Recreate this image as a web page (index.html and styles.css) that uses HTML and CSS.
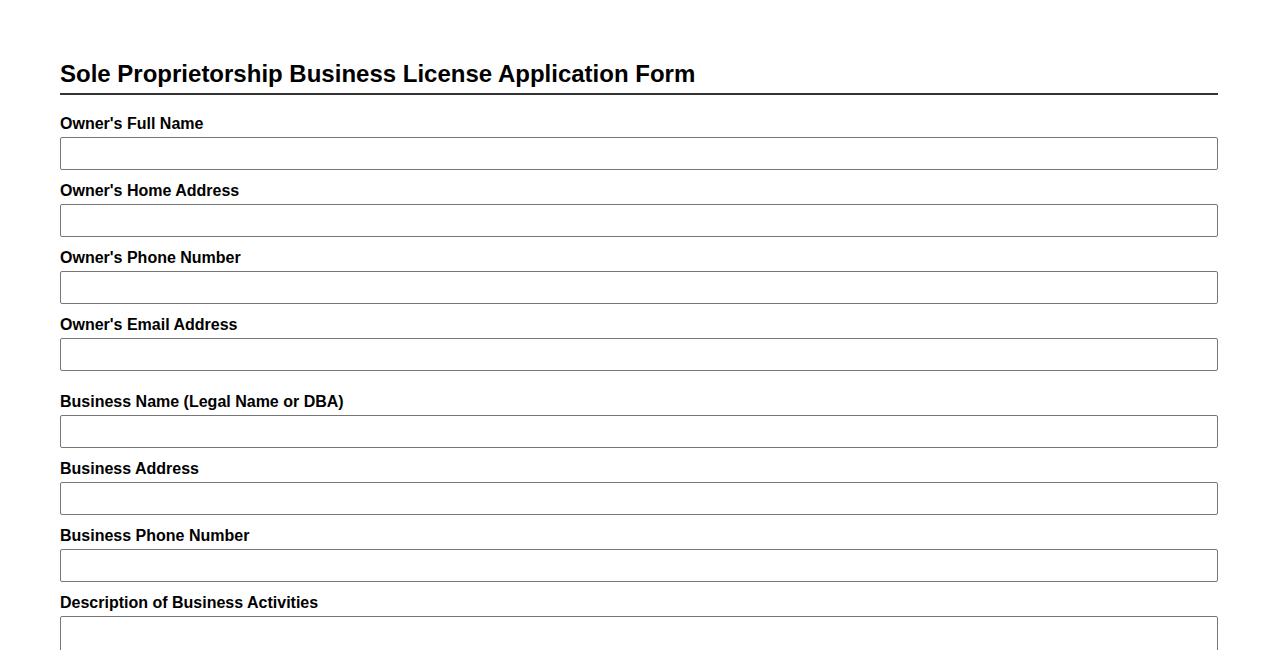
FILE: index.html
```html
<!DOCTYPE html>
<html lang="en">
<head>
    <meta charset="UTF-8">
    <meta name="viewport" content="width=device-width, initial-scale=1.0">
    <title>Business License Application</title>
    <link rel="stylesheet" href="styles.css">
</head>
<body>
    <div class="container">
        <h1>Sole Proprietorship Business License Application Form</h1>
        <form id="licenseForm">
            <div class="section">
                <div class="field">
                    <label for="ownerName">Owner's Full Name</label>
                    <input type="text" id="ownerName">
                </div>
                <div class="field">
                    <label for="ownerAddress">Owner's Home Address</label>
                    <input type="text" id="ownerAddress">
                </div>
                <div class="field">
                    <label for="ownerPhone">Owner's Phone Number</label>
                    <input type="tel" id="ownerPhone">
                </div>
                <div class="field">
                    <label for="ownerEmail">Owner's Email Address</label>
                    <input type="email" id="ownerEmail">
                </div>
            </div>

            <div class="section">
                <div class="field">
                    <label for="businessName">Business Name (Legal Name or DBA)</label>
                    <input type="text" id="businessName">
                </div>
                <div class="field">
                    <label for="businessAddress">Business Address</label>
                    <input type="text" id="businessAddress">
                </div>
                <div class="field">
                    <label for="businessPhone">Business Phone Number</label>
                    <input type="tel" id="businessPhone">
                </div>
                <div class="field">
                    <label for="description">Description of Business Activities</label>
                    <textarea id="description" rows="4"></textarea>
                </div>
            </div>
        </form>
    </div>
</body>
</html>
```

FILE: styles.css
```css
* {
    box-sizing: border-box;
}

body {
    margin: 0;
    font-family: 'Liberation Sans', Arial, sans-serif;
    background: #fff;
    color: #000;
}

.container {
    padding: 60px 60px 40px;
}

h1 {
    font-size: 24px;
    line-height: 28px;
    font-weight: bold;
    margin: 0 0 19px;
    padding-bottom: 5px;
    border-bottom: 2px solid #333;
}

.section {
    padding-bottom: 10px;
}

.field {
    margin-bottom: 11px;
}

label {
    display: block;
    font-weight: bold;
    font-size: 16px;
    line-height: 19px;
    margin-bottom: 4px;
}

input, textarea {
    display: block;
    width: 100%;
    height: 33px;
    padding: 6px 8px;
    border: 1px solid #767676;
    border-radius: 2px;
    font-size: 14px;
    font-family: inherit;
}

textarea {
    height: 90px;
    resize: vertical;
}
```
